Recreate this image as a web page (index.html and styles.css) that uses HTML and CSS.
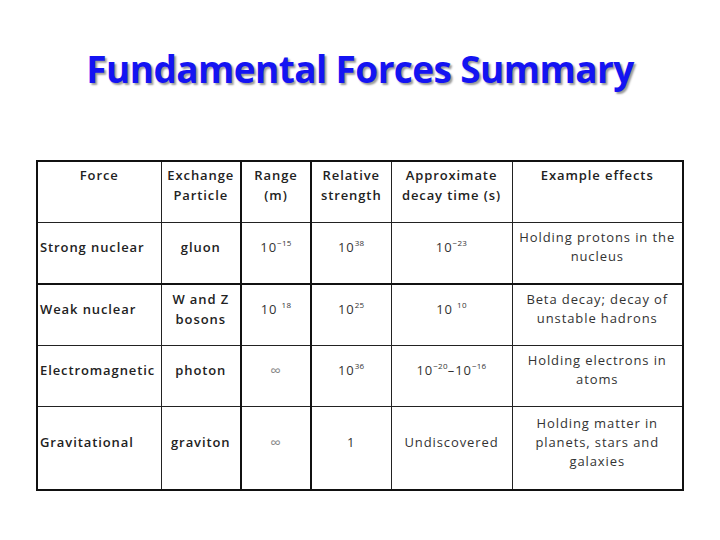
FILE: index.html
```html
<!DOCTYPE html>
<html>
<head>
<meta charset="utf-8">
<link rel="stylesheet" href="styles.css">
</head>
<body>
<div class="slide">
  <h1 class="title">Fundamental Forces Summary</h1>
  <table class="forces">
    <colgroup>
      <col class="c1"><col class="c2"><col class="c3"><col class="c4"><col class="c5"><col class="c6">
    </colgroup>
    <tr class="head">
      <th>Force</th>
      <th class="b">Exchange Particle</th>
      <th class="r">Range<br>(m)</th>
      <th>Relative strength</th>
      <th>Approximate decay time (s)</th>
      <th>Example effects</th>
    </tr>
    <tr class="row1">
      <td class="name">Strong nuclear</td>
      <td class="part b">gluon</td>
      <td class="r">10<sup>−15</sup></td>
      <td>10<sup>38</sup></td>
      <td>10<sup>−23</sup></td>
      <td class="eff">Holding protons in the nucleus</td>
    </tr>
    <tr class="row2">
      <td class="name">Weak nuclear</td>
      <td class="part b">W and Z<br>bosons</td>
      <td class="r">10 <sup>18</sup></td>
      <td>10<sup>25</sup></td>
      <td>10 <sup>10</sup></td>
      <td class="eff">Beta decay; decay of unstable hadrons</td>
    </tr>
    <tr>
      <td class="name">Electromagnetic</td>
      <td class="part b">photon</td>
      <td class="r inf">∞</td>
      <td>10<sup>36</sup></td>
      <td>10<sup>−20</sup>–10<sup>−16</sup></td>
      <td class="eff">Holding electrons in atoms</td>
    </tr>
    <tr class="last">
      <td class="name">Gravitational</td>
      <td class="part b">graviton</td>
      <td class="r inf">∞</td>
      <td>1</td>
      <td>Undiscovered</td>
      <td class="eff">Holding matter in planets, stars and galaxies</td>
    </tr>
  </table>
</div>
</body>
</html>
```

FILE: styles.css
```css
html, body {
  margin: 0;
  padding: 0;
  background: #ffffff;
}
.slide {
  width: 720px;
  height: 540px;
  padding-top: 45px;
  box-sizing: border-box;
  font-family: "Open Sans", "Liberation Sans", sans-serif;
}
.title {
  margin: 0 0 67px 0;
  text-align: center;
  font-size: 37px;
  font-weight: bold;
  letter-spacing: -0.6px;
  line-height: 48px;
  color: #1414f2;
  text-shadow: 2px 2px 2px #9a9a9a;
}
.forces {
  margin-left: 36px;
  width: 646px;
  border-collapse: collapse;
  border: 2px solid #111;
  table-layout: fixed;
  font-size: 13px;
  color: #333;
}
.c1 { width: 124px; }
.c2 { width: 80px; }
.c3 { width: 70px; }
.c4 { width: 80px; }
.c5 { width: 121px; }
.c6 { width: 171px; }
.forces th, .forces td {
  border: 1px solid #222;
  padding: 0 1px 12px 1px;
  height: 48px;
  text-align: center;
  vertical-align: middle;
  line-height: 20px;
  letter-spacing: 0.9px;
}
.forces th {
  font-weight: 600;
  color: #222;
  vertical-align: top;
  padding-top: 3px;
  padding-bottom: 0;
  height: 57px;
}
.forces .b {
  border-right: 2px solid #111;
}
.forces .r {
  border-right: 2px solid #111;
}
.forces .row1 td {
  border-bottom: 2px solid #111;
}
.forces .last td {
  height: 70px;
}
.forces .name {
  text-align: left;
  padding-left: 2px;
  font-weight: 600;
  color: #222;
}
.forces .part {
  font-weight: 600;
  color: #222;
}
.forces .eff {
  line-height: 19px;
}
.forces sup {
  font-size: 8px;
  letter-spacing: 0.3px;
  vertical-align: 6px;
  line-height: 0;
}
.forces .inf {
  font-size: 15px;
  color: #888;
}
```
